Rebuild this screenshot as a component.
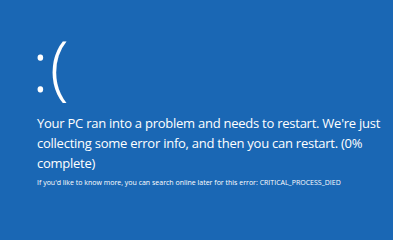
export default function App() {
  return (
    <div
      className="w-[393px] h-[240px] bg-[#1a67b4] text-white overflow-hidden pl-[37px] pt-[22px]"
      style={{ fontFamily: '"Open Sans", "Noto Sans", sans-serif' }}
    >
      <div className="-ml-[5px] text-[70px] leading-[86px] font-light tracking-[1px]">:(</div>
      <p className="mt-[5px] text-[13px] leading-[20px] tracking-[-0.25px]">
        Your PC ran into a problem and needs to restart. We're just collecting some error info, and then you can restart. (0% complete)
      </p>
      <p className="mt-[5px] text-[7px] leading-[10px]">
        If you'd like to know more, you can search online later for this error: CRITICAL_PROCESS_DIED
      </p>
    </div>
  );
}
